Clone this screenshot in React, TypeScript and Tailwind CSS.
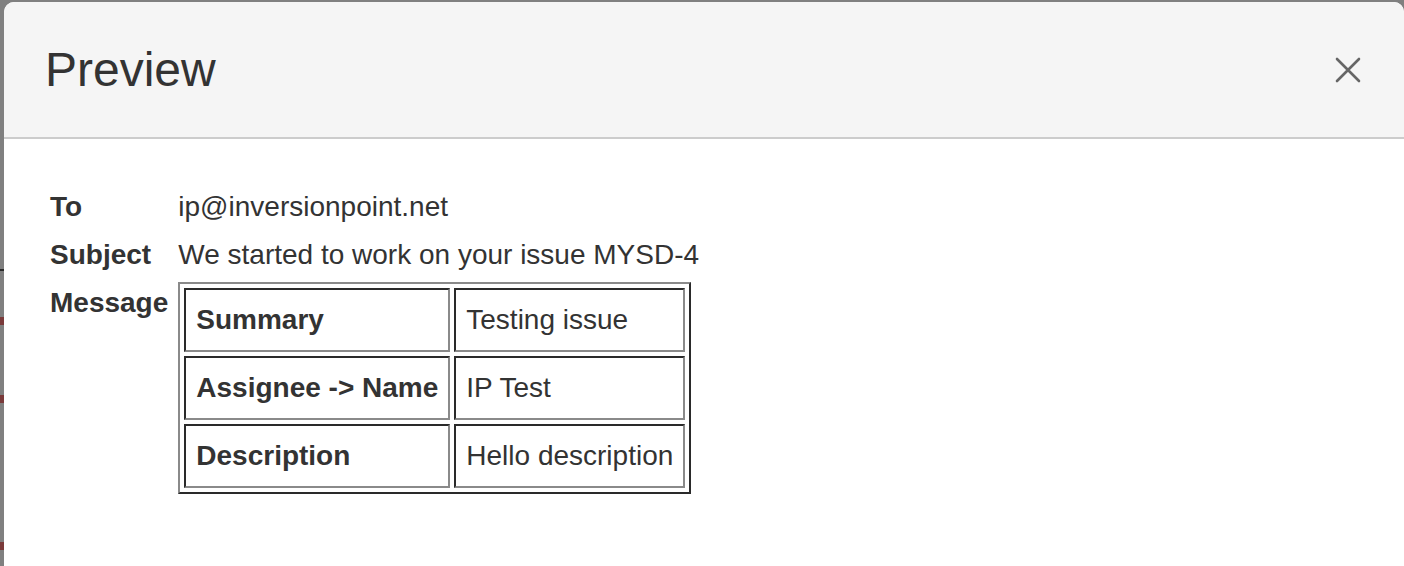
import React from 'react';

const fields = [
  { label: 'To', value: 'ip@inversionpoint.net' },
  { label: 'Subject', value: 'We started to work on your issue MYSD-4' },
];

const rows = [
  { key: 'Summary', value: 'Testing issue' },
  { key: 'Assignee -> Name', value: 'IP Test' },
  { key: 'Description', value: 'Hello description' },
];

const CloseIcon = () => (
  <svg width="26" height="26" viewBox="0 0 26 26" fill="none">
    <path d="M2 2L24 24M24 2L2 24" stroke="#666" strokeWidth="2.6" strokeLinecap="round" />
  </svg>
);

export default function App() {
  return (
    <div className="relative flex h-[566px] w-[1404px] overflow-hidden bg-[#808080] pl-[4px] pt-[2px] font-['Liberation_Sans',Arial,sans-serif] text-[#333]">
      {/* bits of the page behind the backdrop */}
      <span className="absolute left-0 top-[269px] h-[2px] w-[4px] bg-[#2a2a2a]" />
      <span className="absolute left-0 top-[317px] h-[8px] w-[4px] bg-[#7a3a3a]" />
      <span className="absolute left-0 top-[395px] h-[8px] w-[4px] bg-[#7a3a3a]" />
      <span className="absolute left-0 top-[542px] h-[8px] w-[4px] bg-[#7a3a3a]" />

      <div className="flex flex-1 flex-col overflow-hidden rounded-t-[10px] bg-white">
        <div className="flex h-[137px] shrink-0 items-center justify-between border-b-2 border-[#cccccc] bg-[#f5f5f5] pl-[41px] pr-[43px]">
          <h4 className="text-[48px] leading-none font-normal">Preview</h4>
          <button className="flex items-center justify-center">
            <CloseIcon />
          </button>
        </div>

        <div className="pl-[42px] pt-[44px]">
          <div className="grid grid-cols-[auto_auto] justify-start text-[28px]">
            {fields.map((f) => (
              <React.Fragment key={f.label}>
                <div className="py-[4px] pl-[4px] pr-[6px] font-bold leading-[40px]">{f.label}</div>
                <div className="py-[4px] pl-[4px] leading-[40px]">{f.value}</div>
              </React.Fragment>
            ))}
            <div className="py-[4px] pl-[4px] pr-[6px] font-bold leading-[40px]">Message</div>
            <div className="pl-[4px] pt-[3px]">
              <table className="border-separate border-spacing-[4px] border-2 border-t-[#8a8a8a] border-l-[#8a8a8a] border-b-[#2a2a2a] border-r-[#2a2a2a]">
                <tbody>
                  {rows.map((r) => (
                    <tr key={r.key}>
                      <td className="border-2 border-t-[#2a2a2a] border-l-[#2a2a2a] border-b-[#8a8a8a] border-r-[#8a8a8a] px-[10px] py-[10px] font-bold leading-[40px] whitespace-nowrap">
                        {r.key}
                      </td>
                      <td className="border-2 border-t-[#2a2a2a] border-l-[#2a2a2a] border-b-[#8a8a8a] border-r-[#8a8a8a] px-[10px] py-[10px] leading-[40px] whitespace-nowrap">
                        {r.value}
                      </td>
                    </tr>
                  ))}
                </tbody>
              </table>
            </div>
          </div>
        </div>
      </div>
    </div>
  );
}
